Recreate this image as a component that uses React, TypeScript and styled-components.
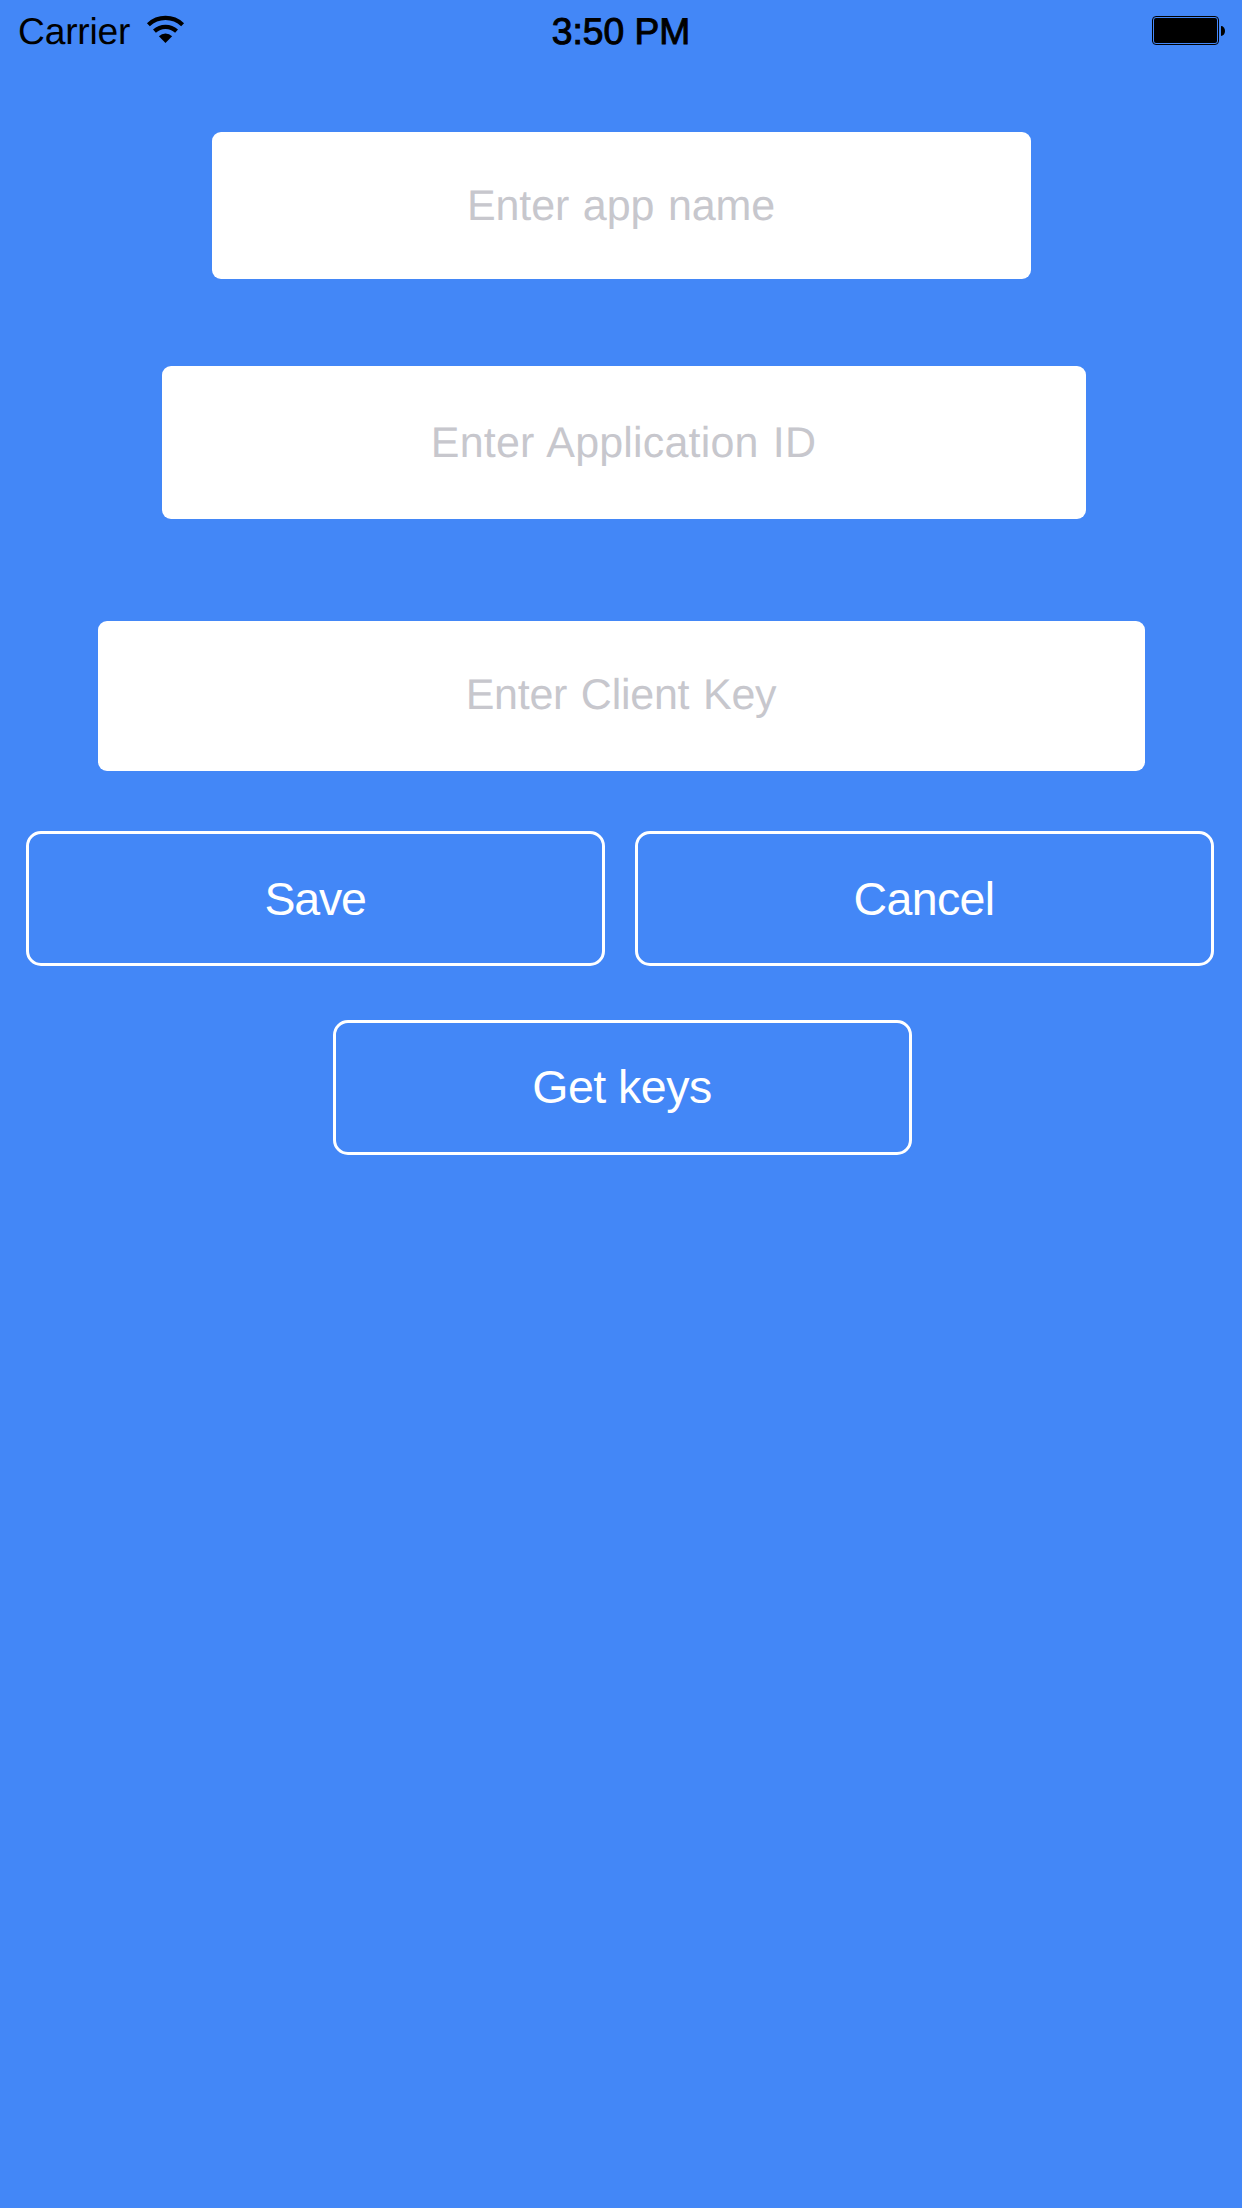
import { useState } from "react";
import styled, { createGlobalStyle } from "styled-components";

const BLUE = "#4387f7";

const GlobalStyle = createGlobalStyle`
  *, *::before, *::after { box-sizing: border-box; }
  body {
    margin: 0;
    background: ${BLUE};
    font-family: "Liberation Sans", Helvetica, Arial, sans-serif;
    text-rendering: geometricPrecision;
  }
`;

const Screen = styled.main`
  width: 1242px;
  min-height: 2208px;
  background: ${BLUE};
  display: flex;
  flex-direction: column;
`;

const StatusBar = styled.header`
  height: 62px;
  padding: 0 17px;
  display: grid;
  grid-template-columns: 1fr auto 1fr;
  align-items: center;
  color: #000;
  font-size: 37.2px;
  line-height: 44px;
`;

const CarrierGroup = styled.div`
  padding-left: 1px;
  display: flex;
  align-items: center;
  gap: 16px;
  letter-spacing: -0.2px;
`;

const WifiIcon = styled.svg`
  display: block;
  width: 39px;
  height: 28px;
  margin-top: -4px;
`;

const Clock = styled.time`
  -webkit-text-stroke: 1px #000;
`;

const Battery = styled.div`
  justify-self: end;
  display: flex;
  align-items: center;
  gap: 2px;
`;

const BatteryShell = styled.div`
  width: 67px;
  height: 29px;
  margin-top: -1px;
  padding: 1px;
  border: 1px solid #000;
  border-radius: 4px;
`;

const BatteryLevel = styled.div`
  height: 100%;
  border-radius: 2px;
  background: #000;
`;

const BatteryCap = styled.div`
  width: 4px;
  height: 10px;
  border-radius: 0 4px 4px 0 / 0 5px 5px 0;
  background: #000;
`;

const Form = styled.form`
  padding-top: 70px;
  display: flex;
  flex-direction: column;
`;

const Field = styled.label<{ $left: number; $width: number; $height: number; $after: number; $lift?: number }>`
  position: relative;
  width: ${(p) => p.$width}px;
  height: ${(p) => p.$height}px;
  margin-left: ${(p) => p.$left}px;
  margin-bottom: ${(p) => p.$after}px;
  padding: 0 1px ${(p) => p.$lift ?? 0}px 0;
  display: flex;
  align-items: center;
  justify-content: center;
  border-radius: 9px;
  background: #fff;
  font-size: 43px;
  line-height: 50px;
`;

const Hint = styled.span<{ $tracking: number }>`
  color: #c7c7cd;
  letter-spacing: ${(p) => p.$tracking}px;
  word-spacing: 2px;
  white-space: nowrap;
`;

const Input = styled.input`
  position: absolute;
  inset: 0;
  width: 100%;
  height: 100%;
  padding: 0 24px;
  border: 0;
  border-radius: inherit;
  outline: none;
  background: transparent;
  color: #000;
  font: inherit;
  text-align: center;
`;

const ButtonRow = styled.div`
  margin-left: 26px;
  display: flex;
  gap: 30px;
`;

const KeysRow = styled.div`
  margin: 54px 0 0 333px;
  display: flex;
`;

const Button = styled.button<{ $drop?: number; $lift?: number; $tracking: number }>`
  width: 579px;
  height: 135px;
  padding: ${(p) => p.$drop ?? 0}px 1px ${(p) => p.$lift ?? 0}px 0;
  border: 3px solid #fff;
  border-radius: 15px;
  background: transparent;
  color: #fff;
  font-family: inherit;
  font-size: 46.5px;
  line-height: 54px;
  letter-spacing: ${(p) => p.$tracking}px;
`;

const fields = [
  { hint: "Enter app name", left: 212, width: 819, height: 147, after: 87, tracking: -0.15, lift: 0 },
  { hint: "Enter Application ID", left: 162, width: 924, height: 153, after: 102, tracking: 0.18, lift: 0 },
  { hint: "Enter Client Key", left: 98, width: 1047, height: 150, after: 60, tracking: -0.25, lift: 3 },
];

type FormFieldProps = (typeof fields)[number];

function FormField({ hint, left, width, height, after, tracking, lift }: FormFieldProps) {
  const [value, setValue] = useState("");
  return (
    <Field $left={left} $width={width} $height={height} $after={after} $lift={lift}>
      {value === "" && <Hint $tracking={tracking}>{hint}</Hint>}
      <Input value={value} onChange={(e) => setValue(e.target.value)} />
    </Field>
  );
}

function Wifi() {
  return (
    <WifiIcon viewBox="0 0 39 28" fill="none" stroke="#000" strokeWidth="4.2">
      <path d="M2.4 9.7A25 25 0 0 1 36.6 9.7" />
      <path d="M8.45 16.15A16.2 16.2 0 0 1 30.55 16.15" />
      <path d="M19.5 28L12.9 21.2A9.5 9.5 0 0 1 26.1 21.2Z" fill="#000" stroke="none" />
    </WifiIcon>
  );
}

export default function App() {
  return (
    <>
      <GlobalStyle />
      <Screen>
        <StatusBar>
          <CarrierGroup>
            <span>Carrier</span>
            <Wifi />
          </CarrierGroup>
          <Clock>3:50 PM</Clock>
          <Battery>
            <BatteryShell>
              <BatteryLevel />
            </BatteryShell>
            <BatteryCap />
          </Battery>
        </StatusBar>
        <Form onSubmit={(e) => e.preventDefault()}>
          {fields.map((field) => (
            <FormField key={field.hint} {...field} />
          ))}
          <ButtonRow>
            <Button type="submit" $tracking={-1.2} $drop={1}>Save</Button>
            <Button type="button" $tracking={-0.6} $drop={1}>Cancel</Button>
          </ButtonRow>
          <KeysRow>
            <Button type="button" $tracking={-0.5} $lift={2}>Get keys</Button>
          </KeysRow>
        </Form>
      </Screen>
    </>
  );
}
